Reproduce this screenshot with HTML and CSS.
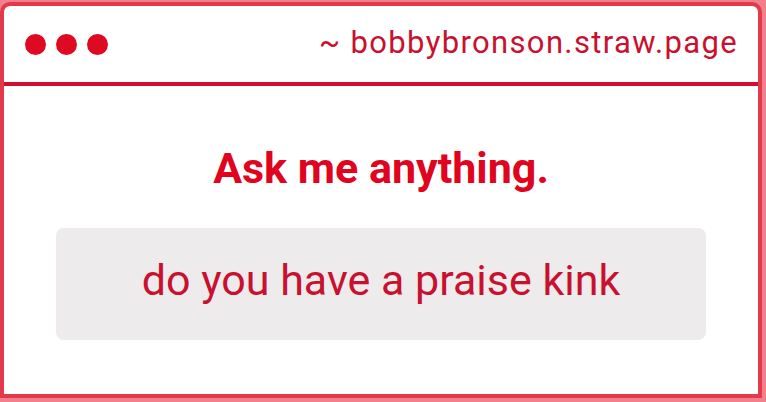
FILE: index.html
```html
<!DOCTYPE html>
<html lang="en">
<head>
<meta charset="utf-8">
<title>Ask me anything</title>
<link rel="stylesheet" href="styles.css">
</head>
<body>
  <div class="window">
    <header class="bar">
      <div class="dots">
        <span class="dot"></span>
        <span class="dot"></span>
        <span class="dot"></span>
      </div>
      <div class="url">~ bobbybronson.straw.page</div>
    </header>
    <main class="content">
      <h1 class="title">Ask me anything.</h1>
      <div class="question">do you have a praise kink</div>
    </main>
  </div>
</body>
</html>
```
FILE: styles.css
```css
html, body {
  margin: 0;
  padding: 0;
}
body {
  background: #f2808c;
  font-family: Roboto, "Liberation Sans", sans-serif;
  padding: 2px 4px 4px 0;
}
.window {
  background: #ffffff;
  border: 4px solid #e23a4a;
  border-radius: 10px 10px 0 0;
}
.bar {
  height: 76px;
  display: flex;
  align-items: center;
  justify-content: space-between;
  padding: 0 21px;
  border-bottom: 4px solid #d20f2c;
}
.dots {
  display: flex;
  gap: 10px;
}
.dot {
  width: 21px;
  height: 21px;
  border-radius: 50%;
  background: #de0a22;
}
.url {
  font-size: 31px;
  line-height: 36px;
  letter-spacing: 1.35px;
  margin-right: -1px;
  padding-bottom: 2px;
  color: #c8112f;
}
.content {
  padding: 57px 52px 54px;
  text-align: center;
}
.title {
  margin: 0 0 35px;
  font-size: 43px;
  line-height: 50px;
  font-weight: 700;
  color: #e0041f;
}
.question {
  background: #edebec;
  border-radius: 8px;
  padding: 28px 20px 36px;
  font-size: 43px;
  line-height: 48px;
  color: #c8112f;
}
```
